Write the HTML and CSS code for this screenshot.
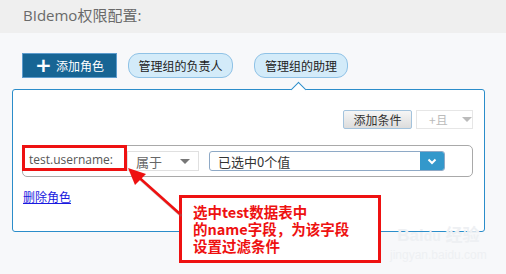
FILE: index.html
```html
<!DOCTYPE html>
<html lang="zh">
<head>
<meta charset="utf-8">
<link rel="stylesheet" href="styles.css">
</head>
<body>
<div class="page">
  <div class="header">BIdemo权限配置:</div>
  <div class="main">
    <div class="tabs">
      <button class="add-role"><span class="plus">+</span>添加角色</button>
      <span class="pill pill-first">管理组的负责人</span>
      <span class="pill pill-active">管理组的助理</span>
    </div>
    <div class="panel">
      <span class="notch"></span>
      <div class="tools">
        <button class="btn-cond">添加条件</button>
        <span class="btn-and">+且<span class="caret caret-light"></span></span>
      </div>
      <div class="cond-row">
        <span class="field-label">test.username:</span>
        <span class="op-select">属于<span class="caret"></span></span>
        <span class="val-select"><span class="val-text">已选中0个值</span><span class="val-btn"><svg width="10" height="7" viewBox="0 0 10 7"><path d="M1.5 1.5 L5 5 L8.5 1.5" fill="none" stroke="#fff" stroke-width="2"/></svg></span></span>
        <span class="mark-box"></span>
      </div>
      <a class="del-link" href="#">删除角色</a>
    </div>
    <div class="watermark">
      <div class="wm-logo">Bai<span class="wm-du">du</span> 经验</div>
      <div class="wm-url">jingyan.baidu.com</div>
    </div>
    <div class="note">选中test数据表中<br>的name字段，为该字段<br>设置过滤条件</div>
    <svg class="arrow" width="506" height="274" viewBox="0 0 506 274">
      <g transform="translate(1.5,2)" opacity="0.35">
        <path d="M180 214 L133 172" stroke="#777" stroke-width="3" fill="none"/>
      </g>
      <path d="M180 214 L134 173" stroke="#ee1111" stroke-width="2.6" fill="none"/>
      <path d="M128 168 L146 174 L135 185 Z" fill="#ee1111"/>
    </svg>
  </div>
</div>
</body>
</html>
```
FILE: styles.css
```css
* { box-sizing: border-box; }
html, body { margin: 0; padding: 0; }
body {
  width: 506px;
  height: 274px;
  overflow: hidden;
  background: #f7f8fa;
  font-family: "Open Sans", "Noto Sans CJK SC", sans-serif;
}
.page { position: relative; width: 506px; height: 274px; }
.header {
  height: 33px;
  background: #efefef;
  color: #6a6a6a;
  font-size: 15px;
  line-height: 31px;
  padding-left: 23px;
}
.main {
  padding: 20px 0 0 12px;
}
.tabs {
  display: flex;
  align-items: center;
  height: 25px;
  margin-left: 10px;
}
.add-role {
  width: 95px;
  height: 25px;
  background: #176594;
  border: 1px solid #5d9ccd;
  color: #fff;
  font-family: "Noto Sans CJK SC", sans-serif;
  font-size: 12px;
  padding: 0;
  display: flex;
  align-items: center;
  justify-content: center;
  line-height: 1;
}
.plus {
  font-size: 20px;
  font-weight: bold;
  margin-right: 4px;
  position: relative;
  top: -1px;
  font-family: "DejaVu Sans", sans-serif;
}
.pill {
  height: 25px;
  background: #d3ebf9;
  border: 1px solid #8fc2e6;
  border-radius: 11px;
  font-family: "Noto Sans CJK SC", sans-serif;
  font-size: 12px;
  color: #222;
  display: flex;
  align-items: center;
  justify-content: center;
}
.pill-first { margin-left: 11px; width: 105px; }
.pill-active { margin-left: 21px; width: 94px; }
.panel {
  position: relative;
  margin-top: 11px;
  width: 473px;
  height: 143px;
  background: #fff;
  border: 1px solid #2b8dca;
  border-radius: 3px;
  padding: 20px 11px 0 9px;
}
.notch {
  position: absolute;
  top: -6px;
  left: 280px;
  width: 11px;
  height: 11px;
  background: #fff;
  border-top: 1px solid #2b8dca;
  border-left: 1px solid #2b8dca;
  transform: rotate(45deg);
}
.tools {
  display: flex;
  justify-content: flex-end;
  gap: 4px;
  height: 19px;
}
.btn-cond {
  width: 69px;
  height: 19px;
  padding: 0;
  background: linear-gradient(#f6f6f6, #dcdcdc);
  border: 1px solid #a3c3dd;
  border-radius: 2px;
  font-family: "Noto Sans CJK SC", sans-serif;
  font-size: 12px;
  color: #333;
  line-height: 17px;
}
.btn-and {
  width: 57px;
  height: 19px;
  border: 1px solid #e6e6e6;
  background: #fff;
  color: #bbb;
  font-family: "Noto Sans CJK SC", sans-serif;
  font-size: 12px;
  display: flex;
  align-items: center;
  padding-left: 12px;
  gap: 14px;
}
.caret {
  display: inline-block;
  width: 0;
  height: 0;
  border-left: 5px solid transparent;
  border-right: 5px solid transparent;
  border-top: 5px solid #777;
}
.caret-light { border-top-color: #bbb; }
.cond-row {
  position: relative;
  margin-top: 16px;
  height: 32px;
  border: 1px solid #a9a9a9;
  border-radius: 5px;
  display: flex;
  align-items: center;
  padding-left: 6px;
}
.field-label {
  width: 98px;
  font-size: 12px;
  color: #555;
  margin-top: -4px;
}
.op-select {
  width: 72px;
  height: 20px;
  border: 1px solid #e0e0e0;
  display: flex;
  align-items: center;
  justify-content: space-between;
  padding: 0 8px 0 8px;
  font-family: "Noto Sans CJK SC", sans-serif;
  font-size: 13px;
  color: #666;
}
.val-select {
  margin-left: 10px;
  width: 236px;
  height: 20px;
  border: 1px solid #8ea9c6;
  border-radius: 3px;
  display: flex;
  align-items: center;
  overflow: hidden;
}
.val-text {
  flex: 1;
  padding-left: 8px;
  font-family: "Noto Sans CJK SC", sans-serif;
  font-size: 13px;
  color: #333;
}
.val-btn {
  width: 24px;
  height: 20px;
  background: #3398cb;
  display: flex;
  align-items: center;
  justify-content: center;
}
.mark-box {
  position: absolute;
  left: -1px;
  top: -1px;
  width: 105px;
  height: 26px;
  border: 3px solid #ee1111;
}
.del-link {
  display: inline-block;
  margin-top: 11px;
  margin-left: 1px;
  font-family: "Noto Sans CJK SC", sans-serif;
  font-size: 12px;
  color: #1a1ae0;
  text-decoration: underline;
}
.watermark {
  position: absolute;
  left: 390px;
  top: 226px;
  color: #eef0f3;
  text-align: center;
  font-family: "Liberation Sans", "Noto Sans CJK SC", sans-serif;
}
.wm-logo { font-size: 17px; font-weight: bold; line-height: 20px; }
.wm-du { font-size: 14px; }
.wm-url { font-size: 12px; line-height: 18px; }
.note {
  position: absolute;
  left: 179px;
  top: 195px;
  width: 202px;
  height: 68px;
  background: #fff;
  border: 3px solid #ee1111;
  padding: 5px 0 0 11px;
  color: #ee1111;
  font-family: "Noto Sans CJK SC", sans-serif;
  font-weight: bold;
  font-size: 14.5px;
  line-height: 17px;
  white-space: nowrap;
}
.arrow {
  position: absolute;
  left: 0;
  top: 0;
  pointer-events: none;
}
```
